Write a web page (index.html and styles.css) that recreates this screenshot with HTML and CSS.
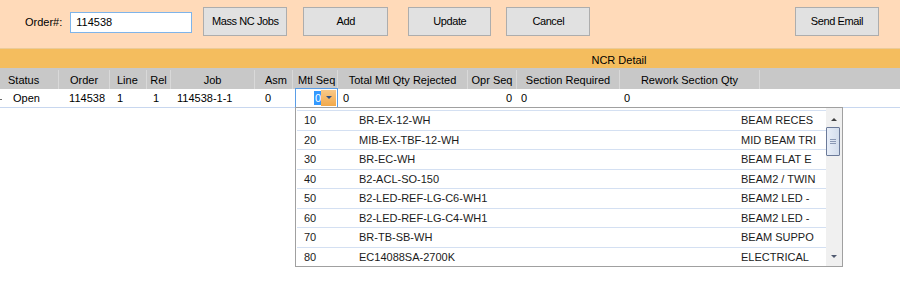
FILE: index.html
```html
<!doctype html>
<html lang="en">
  <head>
    <meta charset="UTF-8" />
    <meta name="viewport" content="width=device-width, initial-scale=1.0" />
    <title>NCR Detail</title>
    <link rel="stylesheet" href="styles.css">
  </head>
  <body>
    <div class="toolbar">
      <label class="order-label" for="order-no">Order#:</label>
      <input class="order-input" id="order-no" type="text" value="114538" />
      <button class="btn btn-mass">Mass NC Jobs</button>
      <button class="btn btn-add">Add</button>
      <button class="btn btn-update">Update</button>
      <button class="btn btn-cancel">Cancel</button>
      <button class="btn btn-email">Send Email</button>
    </div>

    <div class="grid">
      <div class="band">
        <div class="band-spacer"></div>
        <div class="band-title">NCR Detail</div>
      </div>

      <div class="grid-head">
        <div class="cell c-status">Status</div>
        <div class="cell c-order center">Order</div>
        <div class="cell c-line">Line</div>
        <div class="cell c-rel center">Rel</div>
        <div class="cell c-job center">Job</div>
        <div class="cell c-asm right">Asm</div>
        <div class="cell c-mtl">Mtl Seq</div>
        <div class="cell c-total center">Total Mtl Qty Rejected</div>
        <div class="cell c-opr center">Opr Seq</div>
        <div class="cell c-section center">Section Required</div>
        <div class="cell c-rework center">Rework Section Qty</div>
        <div class="cell c-fill"></div>
      </div>

      <div class="grid-row">
        <span class="row-mark"></span>
        <div class="cell c-status data-status">Open</div>
        <div class="cell c-order right">114538</div>
        <div class="cell c-line">1</div>
        <div class="cell c-rel">1</div>
        <div class="cell c-job">114538-1-1</div>
        <div class="cell c-asm data-asm">0</div>
        <div class="cell c-mtl">
          <div class="combo-edit">
            <span class="combo-value"><span class="sel">0</span></span>
            <span class="combo-btn"><span class="arrow-down"></span></span>
          </div>
        </div>
        <div class="cell c-total data-left">0</div>
        <div class="cell c-opr right">0</div>
        <div class="cell c-section data-left">0</div>
        <div class="cell c-rework data-left">0</div>
        <div class="cell c-fill"></div>
      </div>

      <div class="combo-list">
        <div class="combo-rows" id="combo-rows"></div>
        <div class="scrollbar">
          <span class="sb-up"></span>
          <span class="sb-thumb"><span class="grip"></span></span>
          <span class="sb-down"></span>
        </div>
      </div>
    </div>

    <script>
      const materials = [
        ['10', 'BR-EX-12-WH', 'BEAM RECES'],
        ['20', 'MIB-EX-TBF-12-WH', 'MID BEAM TRI'],
        ['30', 'BR-EC-WH', 'BEAM FLAT E'],
        ['40', 'B2-ACL-SO-150', 'BEAM2 / TWIN'],
        ['50', 'B2-LED-REF-LG-C6-WH1', 'BEAM2 LED -'],
        ['60', 'B2-LED-REF-LG-C4-WH1', 'BEAM2 LED -'],
        ['70', 'BR-TB-SB-WH', 'BEAM SUPPO'],
        ['80', 'EC14088SA-2700K', 'ELECTRICAL']
      ];

      const rows = document.getElementById('combo-rows');
      materials.forEach(([seq, part, desc]) => {
        const row = document.createElement('div');
        row.className = 'combo-row';
        [seq, part, desc].forEach((text, i) => {
          const col = document.createElement('span');
          col.className = `col col-${i}`;
          col.textContent = text;
          row.appendChild(col);
        });
        rows.appendChild(row);
      });
    </script>
  </body>
</html>
```

FILE: styles.css
```css
* {
  margin: 0;
  padding: 0;
  box-sizing: border-box;
}

body {
  width: 900px;
  height: 289px;
  overflow: hidden;
  background: #ffffff;
  font-family: "Liberation Sans", Arial, sans-serif;
  font-size: 11px;
  color: #000000;
}

/* toolbar */

.toolbar {
  height: 49px;
  background: #ffdab9;
  border-bottom: 1px solid #ebcb98;
  display: flex;
  align-items: center;
  padding: 7px 21px 13px 25px;
}

.order-label {
  font-size: 11px;
  margin-top: 1px;
}

.order-input {
  width: 122px;
  height: 21px;
  margin: 2px 0 0 8px;
  border: 1px solid #7eb4ea;
  padding-left: 5px;
  font-family: inherit;
  font-size: 11px;
  color: #000000;
  outline: none;
}

.btn {
  width: 84px;
  height: 29px;
  background: #e1e1e1;
  border: 1px solid #adadad;
  font-family: inherit;
  font-size: 11px;
  letter-spacing: -0.4px;
  color: #000000;
}

.btn-mass { margin-left: 11px; }
.btn-add { margin-left: 16px; width: 85px; }
.btn-update { margin-left: 20px; width: 83px; }
.btn-cancel { margin-left: 15px; }
.btn-email { margin-left: auto; }

/* grid */

.grid {
  position: relative;
}

.band {
  height: 19px;
  background: #f4bd5e;
  display: flex;
  align-items: center;
}

.band-spacer {
  width: 338px;
}

.band-title {
  flex: 1;
  text-align: center;
  padding-top: 3px;
}

.grid-head,
.grid-row {
  display: flex;
}

.grid-head {
  height: 21px;
  background: #c8c8c8;
  padding-top: 2px;
}

.grid-head .cell {
  border-right: 1px solid #d9d9d9;
}

.grid-head .c-fill {
  border-right: none;
}

.grid-row {
  position: relative;
  height: 19px;
  background: #ffffff;
  border-bottom: 1px solid #c8d7ef;
}

.row-mark {
  position: absolute;
  left: 0;
  top: 10px;
  width: 2px;
  height: 1px;
  background: #6b6b6b;
}

.cell {
  display: flex;
  align-items: center;
  white-space: nowrap;
  overflow: hidden;
}

.center { justify-content: center; }
.right { justify-content: flex-end; padding-right: 5px; }

.c-status { width: 59px; padding-left: 8px; }
.c-order { width: 51px; }
.c-line { width: 37px; padding-left: 7px; }
.c-rel { width: 24px; padding-left: 6px; }
.c-job { width: 84px; padding-left: 6px; }
.c-asm { width: 38px; }
.c-mtl { width: 45px; padding-left: 5px; }
.c-total { width: 130px; }
.c-opr { width: 49px; }
.c-section { width: 103px; }
.c-rework { width: 140px; }
.c-fill { flex: 1; }

.grid-head .c-rel { padding-left: 0; }
.grid-head .c-job { padding-left: 0; }

.data-status { padding-left: 13px; }
.data-asm { padding-left: 10px; }
.data-left { justify-content: flex-start; padding-left: 4px; }
.grid-row .c-total { padding-left: 5px; }
.grid-row .c-mtl { padding-left: 2px; overflow: visible; }

/* combo editor in Mtl Seq cell */

.combo-edit {
  width: 44px;
  height: 20px;
  margin-top: -1px;
  border: 1px solid #5a9de6;
  background: #ffffff;
  display: flex;
  align-items: stretch;
  position: relative;
  z-index: 1;
}

.combo-value {
  flex: 1;
  display: flex;
  align-items: center;
  justify-content: flex-end;
}

.sel {
  background: #3399ff;
  color: #ffffff;
  line-height: 14px;
  padding: 0 0 0 1px;
}

.combo-btn {
  width: 15px;
  margin: 1px 1px 1px 0;
  background: linear-gradient(#f8c98a, #f2a94a);
  display: flex;
  align-items: center;
  justify-content: center;
}

.arrow-down {
  width: 0;
  height: 0;
  border-left: 3px solid transparent;
  border-right: 3px solid transparent;
  border-top: 3px solid #2f4f86;
}

/* dropdown list */

.combo-list {
  position: absolute;
  left: 295px;
  top: 58px;
  width: 548px;
  height: 160px;
  border: 1px solid #a0a0a0;
  background: #ffffff;
  display: flex;
  z-index: 2;
}

.combo-rows {
  flex: 1;
  padding: 2px 0 0 1px;
}

.combo-row {
  height: 19.5px;
  border-top: 1px solid #d4e0f2;
  display: flex;
  align-items: center;
  color: #1b1b1b;
}

.col {
  white-space: nowrap;
  overflow: hidden;
}

.col-0 { width: 62px; padding-left: 7px; }
.col-1 { width: 382px; }
.col-2 { flex: 1; }

.scrollbar {
  width: 16px;
  background: #f0f0f0;
  position: relative;
}

.sb-up,
.sb-down {
  position: absolute;
  left: 5px;
  width: 0;
  height: 0;
  border-left: 3px solid transparent;
  border-right: 3px solid transparent;
}

.sb-up {
  top: 10px;
  border-bottom: 3px solid #404040;
}

.sb-down {
  bottom: 8px;
  border-top: 3px solid #505a70;
}

.sb-thumb {
  position: absolute;
  left: 0;
  top: 19px;
  width: 14px;
  height: 29px;
  border: 1px solid #6b7a99;
  border-radius: 1px;
  background: linear-gradient(90deg, #e8eef8, #d3ddec);
  display: flex;
  align-items: center;
  justify-content: center;
}

.grip {
  width: 6px;
  height: 5px;
  background: repeating-linear-gradient(#8a98b4 0 1px, transparent 1px 2px);
}
```
